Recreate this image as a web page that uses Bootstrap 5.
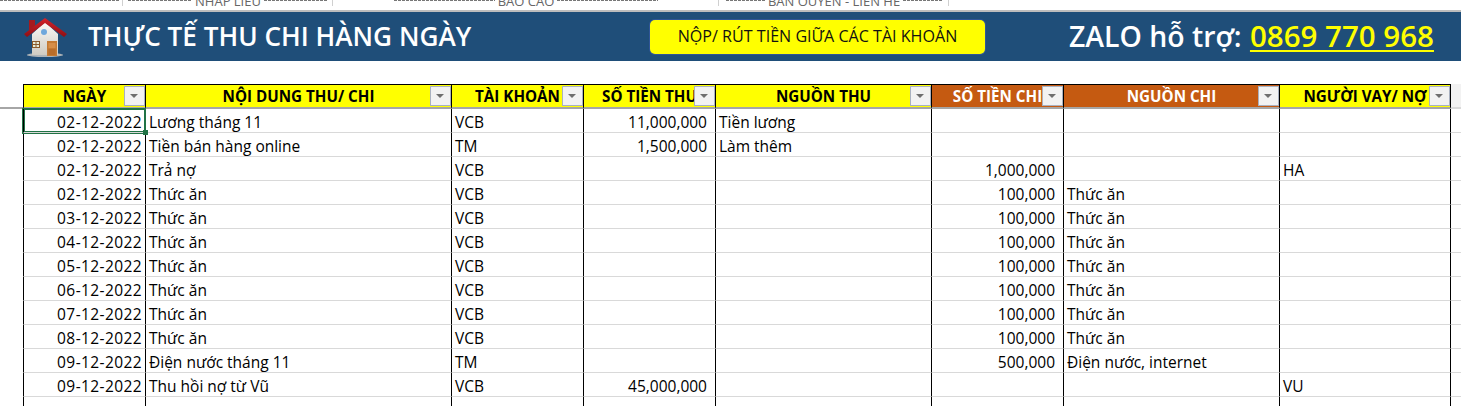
<!DOCTYPE html>
<html lang="vi">
<head>
  <meta charset="UTF-8" />
  <title>Thực tế thu chi hàng ngày</title>
  <link href="https://cdn.jsdelivr.net/npm/bootstrap@5.3.3/dist/css/bootstrap.min.css" rel="stylesheet" />
  <style>
    body { background: #fff; font-family: "Open Sans", "Noto Sans", sans-serif; color: #000; overflow: hidden; }
    .ribbon-strip { height: 12px; overflow: hidden; border-bottom: 2px solid #bdbdbd; }
    .ribbon-group { height: 6px; overflow: hidden; border-right: 1px solid #d0d0d0; font-size: 13px; color: #666; white-space: nowrap; gap: 3px; line-height: 0; padding-top: 1px; }
    .ribbon-group > span { line-height: 0; }
    .group-a { width: 123px; padding-right: 3px; }
    .group-b { width: 210px; padding-left: 5px; padding-right: 4px; }
    .group-c { width: 386px; padding-left: 61px; padding-right: 60px; }
    .group-d { width: 230px; padding-left: 7px; padding-right: 6px; }
    .dash-fill { flex: 1 1 0; height: 1px; margin-top: -1px; background: repeating-linear-gradient(90deg, #777 0 3px, transparent 3px 4px); }
    .banner { height: 49px; background: #1f4e79; padding-left: 23px; }
    .banner-title { font-size: 26.2px; font-weight: 600; color: #fff; margin-left: 21px; width: 562px; white-space: nowrap; }
    .transfer-btn { width: 335px; height: 34px; background: #ff0; border: 0; border-radius: 5px; font-size: 16.1px; color: #111; padding: 0; box-shadow: 0 0 0 1px #2f5597; white-space: nowrap; }
    .zalo { font-size: 28.4px; font-weight: 600; color: #fff; margin-left: 84px; white-space: nowrap; }
    .zalo span { font-size: 29.5px; color: #ff0; margin-left: 1px; text-decoration: underline; text-decoration-thickness: 2px; text-underline-offset: 3px; }
    .sheet { padding-top: 23px; }
    .sheet-grid { display: grid; grid-template-columns: 23px 122px 306px 132px 132px 216px 132px 216px 171px 11px; width: 1461px; }
    .gutter { height: 24px; }
    .gutter.top { height: 25px; border-bottom: 2px solid #a6a6a6; }
    .head-cell { height: 25px; background: #ff0; font-size: 15.2px; font-weight: 700; border-top: 1px solid #000; border-bottom: 2px solid #a6a6a6; border-left: 1px solid #000; position: relative; text-align: center; line-height: 23px; white-space: nowrap; overflow: hidden; }
    .head-cell.chi { background: #c55a11; color: #fff; }
    .filter-btn { position: absolute; right: 0; top: 1px; width: 21px; height: 20px; background: #f2f2f2; border: 1px solid #a9b1c0; }
    .filter-btn::after { content: ""; position: absolute; left: 5px; top: 7px; border: 4px solid transparent; border-top: 4px solid #6e6e6e; border-bottom: 0; }
    .body-cell { height: 24px; border-left: 1px solid #000; border-bottom: 1px solid #d9d9d9; font-size: 15.5px; line-height: 23px; padding: 2px 3px 0; white-space: nowrap; overflow: hidden; }
    .body-cell.num { text-align: right; padding-right: 8px; }
    .body-cell.date { text-align: right; padding-right: 3px; letter-spacing: .4px; }
    .active-cell { position: relative; z-index: 2; overflow: visible; box-shadow: 0 0 0 1px #217346, inset 0 0 0 1px #217346; }
    .active-cell::after { content: ""; position: absolute; right: -3px; bottom: -3px; width: 5px; height: 5px; background: #217346; }
    .edge { border-left: 1px solid #000; height: 24px; border-bottom: 1px solid #d9d9d9; }
    .edge.top { height: 25px; border-bottom: 2px solid #d9d9d9; background: #f2f2f2; }
  </style>
</head>
<body>
  <div class="ribbon-strip d-flex">
    <div class="ribbon-group group-a d-flex"><i class="dash-fill"></i></div>
    <div class="ribbon-group group-b d-flex"><i class="dash-fill"></i><span>NHẬP LIỆU</span><i class="dash-fill"></i></div>
    <div class="ribbon-group group-c d-flex"><i class="dash-fill"></i><span>BÁO CÁO</span><i class="dash-fill"></i></div>
    <div class="ribbon-group group-d d-flex"><i class="dash-fill"></i><span>BẢN QUYỀN - LIÊN HỆ</span><i class="dash-fill"></i></div>
  </div>

  <div class="banner d-flex align-items-center">
    <svg width="44" height="44" viewBox="23 14 44 44">
      <defs>
        <linearGradient id="wall" x1="0" y1="0" x2="0" y2="1"><stop offset="0" stop-color="#fbfaf6" /><stop offset="1" stop-color="#cfcbc2" /></linearGradient>
        <linearGradient id="roof" x1="0" y1="0" x2="0" y2="1"><stop offset="0" stop-color="#d5232a" /><stop offset="1" stop-color="#8e0f14" /></linearGradient>
      </defs>
      <ellipse cx="45" cy="54" rx="18" ry="2" fill="#aeb4b8" />
      <path d="M32 33 45 21l13 12v21H32z" fill="url(#wall)" />
      <path d="M29 19h6v8l-6 5z" fill="#a51a1e" />
      <path d="M24 33 45 17l22 16-3 3-19-14-18 14z" fill="url(#roof)" />
      <circle cx="44" cy="31" r="3" fill="#6fa8dc" />
      <rect x="32" y="40" width="8" height="7" fill="#8a5a2b" />
      <path d="M33 41h2.500v2H33zM36.500 41H39v2h-2.500zM33 44h2.500v2H33zM36.500 44H39v2h-2.500z" fill="#e6ecd9" />
      <rect x="47" y="40" width="10" height="15" fill="#c47a33" />
      <rect x="48.500" y="42" width="7" height="5" fill="#d68e48" />
      <rect x="48.500" y="48" width="7" height="6" fill="#b86d2a" />
    </svg>
    <div class="banner-title">THỰC TẾ THU CHI HÀNG NGÀY</div>
    <button class="transfer-btn" type="button">NỘP/ RÚT TIỀN GIỮA CÁC TÀI KHOẢN</button>
    <div class="zalo">ZALO hỗ trợ: <span>0869 770 968</span></div>
  </div>

  <div class="sheet">
    <div class="sheet-grid" id="sheet"></div>
  </div>

  <script>
    const heads = [
      ["NGÀY", ""], ["NỘI DUNG THU/ CHI", ""], ["TÀI KHOẢN", ""], ["SỐ TIỀN THU", ""],
      ["NGUỒN THU", ""], ["SỐ TIỀN CHI", "chi"], ["NGUỒN CHI", "chi"], ["NGƯỜI VAY/ NỢ", ""]
    ];
    const rows = [
      ["02-12-2022", "Lương tháng 11", "VCB", "11,000,000", "Tiền lương", "", "", ""],
      ["02-12-2022", "Tiền bán hàng online", "TM", "1,500,000", "Làm thêm", "", "", ""],
      ["02-12-2022", "Trả nợ", "VCB", "", "", "1,000,000", "", "HA"],
      ["02-12-2022", "Thức ăn", "VCB", "", "", "100,000", "Thức ăn", ""],
      ["03-12-2022", "Thức ăn", "VCB", "", "", "100,000", "Thức ăn", ""],
      ["04-12-2022", "Thức ăn", "VCB", "", "", "100,000", "Thức ăn", ""],
      ["05-12-2022", "Thức ăn", "VCB", "", "", "100,000", "Thức ăn", ""],
      ["06-12-2022", "Thức ăn", "VCB", "", "", "100,000", "Thức ăn", ""],
      ["07-12-2022", "Thức ăn", "VCB", "", "", "100,000", "Thức ăn", ""],
      ["08-12-2022", "Thức ăn", "VCB", "", "", "100,000", "Thức ăn", ""],
      ["09-12-2022", "Điện nước tháng 11", "TM", "", "", "500,000", "Điện nước, internet", ""],
      ["09-12-2022", "Thu hồi nợ từ Vũ", "VCB", "45,000,000", "", "", "", "VU"],
      ["", "", "", "", "", "", "", ""]
    ];
    let html = `<div class="gutter top"></div>`;
    heads.forEach(h => {
      html += `<div class="head-cell ${h[1]}">${h[0]}<span class="filter-btn"></span></div>`;
    });
    html += `<div class="edge top"></div>`;
    rows.forEach((r, i) => {
      html += `<div class="gutter"></div>`;
      r.forEach((v, j) => {
        let cls = "";
        if (j === 0) cls = "date";
        if (j === 3 || j === 5) cls = "num";
        if (i === 0 && j === 0) cls += " active-cell";
        html += `<div class="body-cell ${cls}">${v}</div>`;
      });
      html += `<div class="edge"></div>`;
    });
    document.getElementById("sheet").innerHTML = html;
  </script>
  <script src="https://cdn.jsdelivr.net/npm/bootstrap@5.3.3/dist/js/bootstrap.bundle.min.js"></script>
</body>
</html>
